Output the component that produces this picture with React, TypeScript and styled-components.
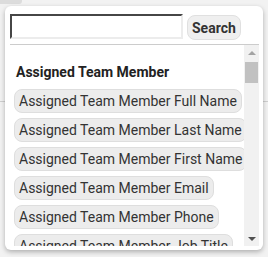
import styled, { createGlobalStyle } from "styled-components";

const GlobalStyle = createGlobalStyle`
  html, body {
    margin: 0;
    padding: 0;
    background: #f2f2f2;
    font-family: Roboto, "Liberation Sans", sans-serif;
  }
`;

const Backdrop = styled.div`
  position: relative;
  width: 268px;
  height: 257px;
  overflow: hidden;
  background: #f2f2f2;
`;

const Tab = styled.div`
  position: absolute;
  left: 0;
  top: 0;
  width: 22px;
  height: 4px;
  background: #dcdcdc;
  border-bottom-right-radius: 3px;
`;

const Rule = styled.div`
  position: absolute;
  left: 0;
  right: 0;
  top: 101px;
  height: 1px;
  background: #cfcfcf;
`;

const Popup = styled.div`
  position: absolute;
  left: 5px;
  top: 6px;
  width: 258px;
  height: 244px;
  background: #fff;
  border-radius: 6px;
  box-shadow: 0 2px 5px rgba(0, 0, 0, 0.28);
  padding: 8px 4px 0 5px;
  box-sizing: border-box;
  display: flex;
  flex-direction: column;
`;

const SearchRow = styled.div`
  display: flex;
  align-items: center;
  gap: 4px;
  padding-bottom: 4px;
  border-bottom: 1px solid #cccccc;
`;

const SearchInput = styled.input`
  width: 173px;
  height: 25px;
  box-sizing: border-box;
  border: 2px inset #ececec;
  border-top-color: #9a9a9a;
  border-left-color: #9a9a9a;
  border-radius: 0;
  padding: 0 4px;
  font-family: Roboto, "Liberation Sans", sans-serif;
  font-size: 14px;
  margin-top: -1px;
`;

const SearchButton = styled.button`
  height: 25px;
  margin-top: 1px;
  padding: 0 4px;
  background: #efefef;
  border: 1px solid #e0e0e0;
  border-radius: 8px;
  font-family: Roboto, "Liberation Sans", sans-serif;
  font-size: 14px;
  font-weight: 700;
  color: #333;
  cursor: pointer;
`;

const ListArea = styled.div`
  display: flex;
  height: 201px;
`;

const List = styled.div`
  flex: 1;
  overflow: hidden;
  padding: 0 0 0 4px;
  box-sizing: border-box;
`;

const ScrollTrack = styled.div`
  width: 15px;
  background: #f1f1f1;
  display: flex;
  flex-direction: column;
  align-items: center;
`;

const ScrollButton = styled.div<{ $down?: boolean }>`
  width: 15px;
  height: 15px;
  display: flex;
  align-items: center;
  justify-content: center;
  margin-top: ${(p) => (p.$down ? "auto" : "0")};
`;

const Arrow = styled.div<{ $down?: boolean; $dim?: boolean }>`
  width: 0;
  height: 0;
  border-left: 4px solid transparent;
  border-right: 4px solid transparent;
  ${(p) =>
    p.$down
      ? `border-top: 4px solid ${p.$dim ? "#a3a3a3" : "#505050"};`
      : `border-bottom: 4px solid ${p.$dim ? "#a3a3a3" : "#505050"};`}
`;

const Thumb = styled.div`
  width: 13px;
  height: 21px;
  margin-top: 2px;
  background: #c1c1c1;
`;

const GroupTitle = styled.div`
  font-size: 14px;
  font-weight: 700;
  color: #222;
  margin: 19px 0 0 2px;
  line-height: 16px;
`;

const Chips = styled.div`
  display: flex;
  flex-direction: column;
  align-items: flex-start;
  gap: 5px;
  margin-top: 9px;
`;

const Chip = styled.button`
  background: #ececec;
  border: 1px solid #dedede;
  border-radius: 8px;
  padding: 3px 4px;
  font-family: Roboto, "Liberation Sans", sans-serif;
  font-size: 14px;
  line-height: 16px;
  color: #333;
  white-space: nowrap;
  flex-shrink: 0;
  cursor: pointer;
`;

const fields = [
  "Full Name",
  "Last Name",
  "First Name",
  "Email",
  "Phone",
  "Job Title",
];

export default function App() {
  return (
    <Backdrop>
      <GlobalStyle />
      <Tab />
      <Rule />
      <Popup>
        <SearchRow>
          <SearchInput type="text" />
          <SearchButton>Search</SearchButton>
        </SearchRow>
        <ListArea>
          <List>
            <GroupTitle>Assigned Team Member</GroupTitle>
            <Chips>
              {fields.map((f) => (
                <Chip key={f}>Assigned Team Member {f}</Chip>
              ))}
            </Chips>
          </List>
          <ScrollTrack>
            <ScrollButton>
              <Arrow $dim />
            </ScrollButton>
            <Thumb />
            <ScrollButton $down>
              <Arrow $down />
            </ScrollButton>
          </ScrollTrack>
        </ListArea>
      </Popup>
    </Backdrop>
  );
}
